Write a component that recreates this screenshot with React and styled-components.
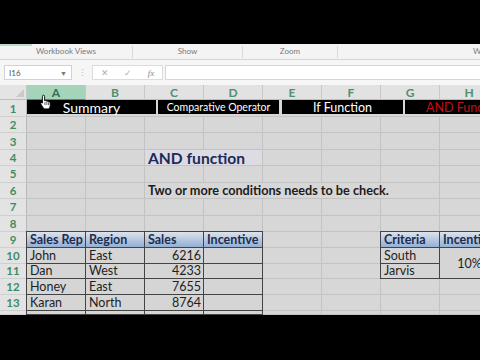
import React from 'react'
import styled, { createGlobalStyle, css } from 'styled-components'

const GlobalStyle = createGlobalStyle`
  html, body { margin: 0; padding: 0; background: #000; }
  body { width: 480px; height: 360px; overflow: hidden; font-family: Lato, "Liberation Sans", sans-serif; }
  * { box-sizing: border-box; }
`

const Page = styled.div`
  width: 480px;
  height: 360px;
  display: flex;
  flex-direction: column;
  background: #000;
  overflow: hidden;
  position: relative;
`

const Letterbox = styled.div`
  flex: none;
  height: ${p => p.$h}px;
  background: #000;
`

const Ribbon = styled.div`
  flex: none;
  height: 16px;
  display: flex;
  background: #f4f4f4;
  border-bottom: 1px solid #d6d6d6;
  position: relative;
`

const RibbonGroup = styled.div`
  flex: none;
  width: ${p => p.$w}px;
  display: flex;
  align-items: flex-end;
  justify-content: center;
  padding-bottom: 2px;
  font-size: 8px;
  color: #7a7a7a;
  border-right: ${p => (p.$last ? 'none' : '1px solid #dadada')};
  margin: 2px 0 1px;
`

const TabMark = styled.div`
  position: absolute;
  left: 0;
  top: 0;
  width: 32px;
  height: 2px;
  background: #bcdcc9;
`

const FormulaBar = styled.div`
  flex: none;
  height: 25px;
  display: flex;
  align-items: center;
  background: #f6f6f6;
  padding-left: 4px;
`

const NameBox = styled.div`
  width: 68px;
  height: 15px;
  background: #fff;
  border: 1px solid #d2d2d2;
  display: flex;
  align-items: center;
  justify-content: space-between;
  padding: 0 4px;
  font-size: 8px;
  color: #555;
`

const Caret = styled.span`
  font-size: 7px;
  color: #777;
`

const Dots = styled.div`
  width: 20px;
  text-align: center;
  font-size: 9px;
  color: #bbb;
`

const FxBox = styled.div`
  width: 71px;
  height: 15px;
  display: flex;
  align-items: center;
  justify-content: space-around;
  background: #fff;
  border: 1px solid #dcdcdc;
  color: #b0b0b0;
  font-size: 9px;
`

const FxLabel = styled.span`
  font-family: "Liberation Serif", serif;
  font-style: italic;
  color: #888;
  font-size: 9px;
`

const FormulaInput = styled.div`
  flex: 1;
  height: 15px;
  margin-left: 2px;
  background: #fff;
  border: 1px solid #d6d6d6;
  border-right: none;
`

const Sheet = styled.div`
  flex: none;
  height: 230px;
  display: grid;
  grid-template-columns: 27px repeat(8, 59px);
  grid-template-rows: 15px 17px repeat(7, 16.43px) repeat(5, 15.8px) 1fr;
  background: #d7d7d7;
  overflow: hidden;
  position: relative;
`

const place = css`
  grid-row: ${p => p.$r};
  grid-column: ${p => p.$c} / span ${p => p.$span || 1};
`

const Corner = styled.div`
  ${place};
  background: #e4e4e4;
  border-right: 1px solid #c6c6c6;
  border-bottom: 1px solid #bdbdbd;
  position: relative;
  &::after {
    content: '';
    position: absolute;
    right: 2px;
    bottom: 2px;
    border-left: 8px solid transparent;
    border-bottom: 8px solid #c9c9c9;
  }
`

const ColHead = styled.div`
  ${place};
  display: flex;
  align-items: center;
  justify-content: center;
  font-size: 12px;
  font-weight: 700;
  color: ${p => (p.$active ? '#2f7150' : '#4c9070')};
  background: ${p => (p.$active ? '#a6d4ba' : '#e2e2e2')};
  border-right: 1px solid #c8c8c8;
  border-bottom: 1px solid ${p => (p.$active ? '#3f9367' : '#bdbdbd')};
`

const RowHead = styled.div`
  ${place};
  display: flex;
  align-items: center;
  justify-content: center;
  font-size: 11.5px;
  font-weight: 700;
  color: #3f8c63;
  background: #e3e3e3;
  border-right: 1px solid #b9b9b9;
  border-bottom: 1px solid #cfcfcf;
`

const Cell = styled.div`
  ${place};
  border-right: 1px solid #c3c3c3;
  border-bottom: 1px solid #c3c3c3;
`

const TabRow = styled.div`
  ${place};
  display: flex;
  align-items: flex-start;
  gap: 2px;
  background: #d7d7d7;
  border-bottom: 1px solid #c3c3c3;
`

const BlackTab = styled.div`
  flex: none;
  width: ${p => p.$w}px;
  height: 14px;
  margin-left: ${p => p.$gap || 0}px;
  background: #000;
  display: flex;
  align-items: center;
  justify-content: center;
  white-space: nowrap;
  font-size: ${p => p.$size || 12.5}px;
  color: ${p => p.$color || '#fff'};
`

const Overflow = styled.div`
  ${place};
  display: flex;
  align-items: center;
  padding-left: 3px;
  white-space: nowrap;
  background: ${p => p.$fill || '#d7d7d7'};
  border-right: 1px solid #c3c3c3;
  border-bottom: 1px solid #c3c3c3;
  font-weight: 700;
  font-size: ${p => p.$size}px;
  color: ${p => p.$color};
`

const TableCell = styled.div`
  ${place};
  display: flex;
  align-items: center;
  justify-content: ${p => (p.$num ? 'flex-end' : p.$center ? 'center' : 'flex-start')};
  padding: 0 2px 0 3px;
  white-space: nowrap;
  overflow: hidden;
  font-size: 12.5px;
  color: #1e1e1e;
  background: #d5d5d5;
  border-right: 1px solid #444;
  border-bottom: 1px solid #444;
  border-left: ${p => (p.$first ? '1px solid #444' : 'none')};
  margin-left: ${p => (p.$first ? '-1px' : '0')};
`

const HeadCell = styled(TableCell)`
  font-weight: 700;
  color: #1d2c4e;
  background: linear-gradient(#dde3ec, #a9bedb 70%, #93b0d8);
  border-top: 1px solid #444;
  margin-top: -1px;
`

const Cursor = styled.svg`
  position: absolute;
  left: 40px;
  top: 9px;
`

const cols = ['A', 'B', 'C', 'D', 'E', 'F', 'G', 'H']
const sales = [
  ['John', 'East', '6216'],
  ['Dan', 'West', '4233'],
  ['Honey', 'East', '7655'],
  ['Karan', 'North', '8764'],
]

const App = () => {
  const rowNums = Array.from({ length: 14 }, (_, i) => i + 1)
  return (
    <Page>
      <GlobalStyle />
      <Letterbox $h={44} />
      <Ribbon>
        <TabMark />
        <RibbonGroup $w={133}>Workbook Views</RibbonGroup>
        <RibbonGroup $w={110}>Show</RibbonGroup>
        <RibbonGroup $w={95}>Zoom</RibbonGroup>
        <RibbonGroup $w={300} $last>Window</RibbonGroup>
      </Ribbon>
      <FormulaBar>
        <NameBox>
          <span>I16</span>
          <Caret>▼</Caret>
        </NameBox>
        <Dots>⋮</Dots>
        <FxBox>
          <span>✕</span>
          <span>✓</span>
          <FxLabel>fx</FxLabel>
        </FxBox>
        <FormulaInput />
      </FormulaBar>
      <Sheet>
        <Corner $r={1} $c={1} />
        {cols.map((c, i) => (
          <ColHead key={c} $r={1} $c={i + 2} $active={c === 'A'}>{c}</ColHead>
        ))}
        {rowNums.map(n => (
          <React.Fragment key={n}>
            <RowHead $r={n + 1} $c={1}>{n < 14 ? n : ''}</RowHead>
            {cols.map((c, i) => (
              <Cell key={c} $r={n + 1} $c={i + 2} />
            ))}
          </React.Fragment>
        ))}

        <TabRow $r={2} $c={2} $span={8}>
          <BlackTab $w={129} $size={14}>Summary</BlackTab>
          <BlackTab $w={121} $size={10.5}>Comparative Operator</BlackTab>
          <BlackTab $w={121} $gap={1}>If Function</BlackTab>
          <BlackTab $w={121} $color="#c0101a">AND Function</BlackTab>
        </TabRow>

        <Overflow $r={5} $c={4} $span={2} $size={15.6} $color="#1f2a5c" $fill="#dcdce2">AND function</Overflow>
        <Overflow $r={7} $c={4} $span={5} $size={12.7} $color="#1c1c1c">Two or more conditions needs to be check.</Overflow>

        <HeadCell $r={10} $c={2} $first>Sales Rep</HeadCell>
        <HeadCell $r={10} $c={3}>Region</HeadCell>
        <HeadCell $r={10} $c={4}>Sales</HeadCell>
        <HeadCell $r={10} $c={5}>Incentive</HeadCell>
        {sales.map((row, i) => (
          <React.Fragment key={row[0]}>
            <TableCell $r={11 + i} $c={2} $first>{row[0]}</TableCell>
            <TableCell $r={11 + i} $c={3}>{row[1]}</TableCell>
            <TableCell $r={11 + i} $c={4} $num>{row[2]}</TableCell>
            <TableCell $r={11 + i} $c={5} />
          </React.Fragment>
        ))}
        <TableCell $r={15} $c={2} $first />
        <TableCell $r={15} $c={3} />
        <TableCell $r={15} $c={4} />
        <TableCell $r={15} $c={5} />

        <HeadCell $r={10} $c={8} $first>Criteria</HeadCell>
        <HeadCell $r={10} $c={9}>Incentive</HeadCell>
        <TableCell $r={11} $c={8} $first>South</TableCell>
        <TableCell $r={12} $c={8} $first>Jarvis</TableCell>
        <TableCell $r="11 / span 2" $c={9} $center>10%</TableCell>

        <Cursor width="12" height="15" viewBox="0 0 12 15">
          <path
            d="M3.5 1.2c.7 0 1.1.5 1.1 1.1v4.3l.4-.1c.6-.2 1.1.1 1.3.5.5-.3 1.2-.1 1.4.4.5-.2 1.2 0 1.3.6.4 0 1.2.2 1.2 1.1v2.6c0 1.2-.9 2.6-1.6 3.2H4.2C3 13.5 1.4 11 .8 9.9c-.4-.7.2-1.5 1-1.200l.6.4V2.3c0-.6.4-1.1 1.1-1.1z"
            fill="#fff"
            stroke="#000"
            strokeWidth="0.9"
          />
          <path d="M5 8v3M6.8 8v3M8.5 8.4v2.6" stroke="#000" strokeWidth="0.6" />
        </Cursor>
      </Sheet>
      <Letterbox $h={45} />
    </Page>
  )
}

export default App
